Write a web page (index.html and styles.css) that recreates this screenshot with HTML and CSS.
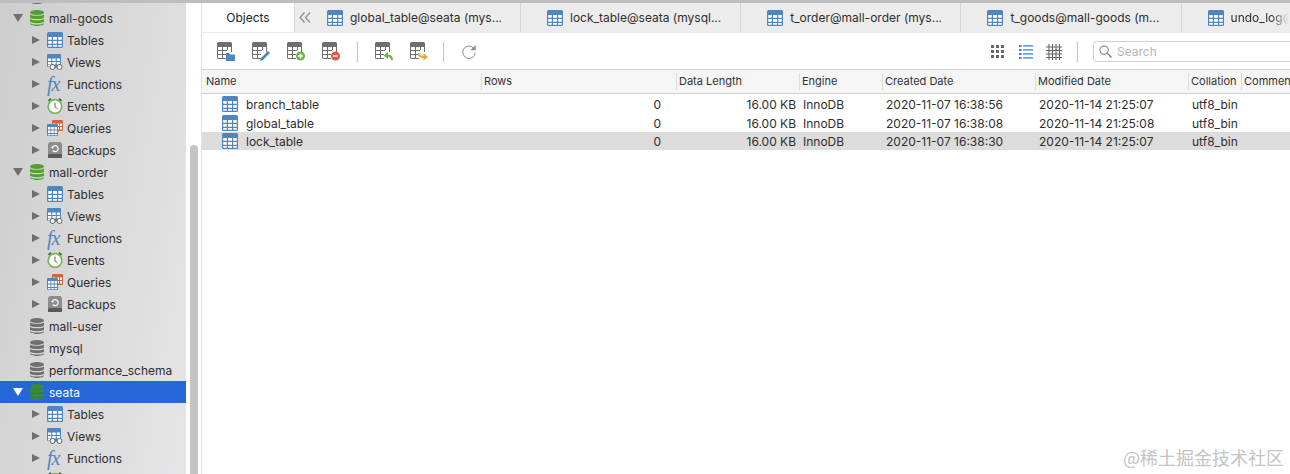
FILE: index.html
```html
<!DOCTYPE html>
<html lang="en">
<head>
<meta charset="utf-8">
<title>Navicat</title>
<link rel="stylesheet" href="styles.css">
</head>
<body>
<svg class="defs" width="0" height="0" aria-hidden="true">
  <defs>
    <symbol id="tbl" viewBox="0 0 16 16">
      <rect width="16" height="16" rx="1.5" fill="#4f86c0"/>
      <path fill="#fff" d="M1.2 5h3.6v2.8H1.200zM6 5h4v2.800H6zM11.200 5h3.600v2.800h-3.600zM1.200 9h3.600v2.800H1.200zM6 9h4v2.800H6zM11.200 9h3.600v2.800h-3.600zM1.200 13h3.600v1.800H1.200zM6 13h4v1.800H6zM11.200 13h3.600v1.800h-3.600z"/>
    </symbol>
    <symbol id="view" viewBox="0 0 16 16">
      <rect width="14" height="13" rx="1" fill="#4f86c0"/>
      <path fill="#fff" d="M1 4.500h3.200v2.500H1zM5.300 4.500h3.400v2.500H5.300zM9.800 4.500H13v2.500H9.800zM1 8h3.200v2.500H1zM5.300 8h3.400v2.500H5.300zM9.800 8H13v2.500H9.800zM1 11h3.200v1.500H1z"/>
      <circle cx="5.500" cy="13" r="2.500" fill="#fff" stroke="#666" stroke-width="1"/>
      <circle cx="12.500" cy="13" r="2.500" fill="#fff" stroke="#666" stroke-width="1"/>
      <path d="M8 13h2" stroke="#666"/>
    </symbol>
    <symbol id="clock" viewBox="0 0 16 16">
      <path d="M1.500 3 4 .8M14.500 3 12 .8" stroke="#44742f" stroke-width="2"/>
      <circle cx="8" cy="8.500" r="6.800" fill="#fff" stroke="#79b65b" stroke-width="1.800"/>
      <path d="M8 4.500v4.500" fill="none" stroke="#666" stroke-width="1"/>
      <path d="M8 9l2.800 2" stroke="#d9534f" stroke-width="1"/>
    </symbol>
    <symbol id="query" viewBox="0 0 16 16">
      <rect x="5" width="11" height="11" rx="1" fill="#d0643f"/>
      <path fill="#fff" d="M6 3.500h2.500v2.500H6zM10 3.500h2v2.500h-2zM13 3.500h2v2.500h-2zM10 7h2v2.500h-2zM13 7h2v2.500h-2z"/>
      <rect y="4" width="11" height="12" rx="1" fill="#4f86c0"/>
      <path fill="#fff" d="M1 7h2.500v2.500H1zM4.300 7h2.500v2.500H4.300zM7.600 7H10v2.500H7.600zM1 10.500h2.500V13H1zM4.300 10.500h2.500V13H4.300zM7.600 10.500H10V13H7.600zM1 14h2.500v1.300H1zM4.300 14h2.500v1.300H4.300zM7.600 14H10v1.300H7.600z"/>
    </symbol>
    <symbol id="backup" viewBox="0 0 16 16">
      <path d="M2.500 0h11L15 2v14H1V2z" fill="#8c8c8c"/>
      <rect x="1" y="12" width="14" height="4" rx="1" fill="#5a5a5a"/>
      <path d="M5.300 5.500a3 3 0 1 1 .5 3" fill="none" stroke="#fff" stroke-width="1.200"/>
      <path d="M3.800 5l2.800-.500-.6 2.500z" fill="#fff"/>
    </symbol>
    <symbol id="db" viewBox="0 0 14 16">
      <ellipse cx="7" cy="2.500" rx="7" ry="2.500"/>
      <path d="M0 4.200C1 6.300 13 6.300 14 4.200V7.500C13 9.500 1 9.500 0 7.500z"/>
      <path d="M0 8.800C1 10.800 13 10.800 14 8.800V11.800C13 13.700 1 13.700 0 11.800z"/>
      <path d="M0 13C1 15 13 15 14 13V13.800C13 16.700 1 16.700 0 13.800z"/>
    </symbol>
    <symbol id="gt" viewBox="0 0 18 19">
      <path fill="#6e6e6e" d="M1.500 0h12A1.500 1.500 0 0 1 15 1.500V10h-1V5H11v3h-1V5H6v3h4v1H6v3h3v1H6v3h3v1H1.500A1.500 1.500 0 0 1 0 15.500v-14A1.500 1.500 0 0 1 1.500 0zM1 5v3h4V5zM1 9v3h4V9zM1 13v2.500a.5.500 0 0 0 .5.500H5v-3z"/>
    </symbol>
  </defs>
</svg>

<div class="app">
  <div class="topline"></div>
  <div class="workspace">
    <aside class="sidebar">
      <ul class="tree">
        <li class="row db"><span class="tri none"></span><svg class="dbi grey"><use href="#db"/></svg></li>
        <li class="row db"><span class="tri down"></span><svg class="dbi green"><use href="#db"/></svg><span>mall-goods</span></li>
        <li class="row child"><span class="tri right"></span><svg class="ci"><use href="#tbl"/></svg><span>Tables</span></li>
        <li class="row child"><span class="tri right"></span><svg class="ci"><use href="#view"/></svg><span>Views</span></li>
        <li class="row child"><span class="tri right"></span><span class="fx">fx</span><span>Functions</span></li>
        <li class="row child"><span class="tri right"></span><svg class="ci"><use href="#clock"/></svg><span>Events</span></li>
        <li class="row child"><span class="tri right"></span><svg class="ci"><use href="#query"/></svg><span>Queries</span></li>
        <li class="row child"><span class="tri right"></span><svg class="ci"><use href="#backup"/></svg><span>Backups</span></li>
        <li class="row db"><span class="tri down"></span><svg class="dbi green"><use href="#db"/></svg><span>mall-order</span></li>
        <li class="row child"><span class="tri right"></span><svg class="ci"><use href="#tbl"/></svg><span>Tables</span></li>
        <li class="row child"><span class="tri right"></span><svg class="ci"><use href="#view"/></svg><span>Views</span></li>
        <li class="row child"><span class="tri right"></span><span class="fx">fx</span><span>Functions</span></li>
        <li class="row child"><span class="tri right"></span><svg class="ci"><use href="#clock"/></svg><span>Events</span></li>
        <li class="row child"><span class="tri right"></span><svg class="ci"><use href="#query"/></svg><span>Queries</span></li>
        <li class="row child"><span class="tri right"></span><svg class="ci"><use href="#backup"/></svg><span>Backups</span></li>
        <li class="row db"><span class="tri none"></span><svg class="dbi grey"><use href="#db"/></svg><span>mall-user</span></li>
        <li class="row db"><span class="tri none"></span><svg class="dbi grey"><use href="#db"/></svg><span>mysql</span></li>
        <li class="row db"><span class="tri none"></span><svg class="dbi grey"><use href="#db"/></svg><span>performance_schema</span></li>
        <li class="row db active"><span class="tri down"></span><svg class="dbi green"><use href="#db"/></svg><span>seata</span></li>
        <li class="row child"><span class="tri right"></span><svg class="ci"><use href="#tbl"/></svg><span>Tables</span></li>
        <li class="row child"><span class="tri right"></span><svg class="ci"><use href="#view"/></svg><span>Views</span></li>
        <li class="row child"><span class="tri right"></span><span class="fx">fx</span><span>Functions</span></li>
        <li class="row child"><span class="tri right"></span><svg class="ci"><use href="#clock"/></svg></li>
      </ul>
    </aside>
    <div class="scrolltrack"><div class="thumb"></div></div>

    <main class="main">
      <nav class="tabs">
        <div class="tab-objects">Objects</div>
        <div class="chev"><svg class="chevi" viewBox="0 0 12 11"><path d="M5.500.5 1 5.500l4.500 5M11 .5 6.500 5.500l4.500 5" fill="none" stroke="#8c8c8c" stroke-width="1.200"/></svg></div>
        <div class="tab first"><svg class="ci"><use href="#tbl"/></svg><span>global_table@seata (mys...</span></div>
        <div class="tab"><svg class="ci"><use href="#tbl"/></svg><span>lock_table@seata (mysql...</span></div>
        <div class="tab"><svg class="ci"><use href="#tbl"/></svg><span>t_order@mall-order (mys...</span></div>
        <div class="tab"><svg class="ci"><use href="#tbl"/></svg><span>t_goods@mall-goods (m...</span></div>
        <div class="tab last"><svg class="ci"><use href="#tbl"/></svg><span class="fade">undo_log@seata</span></div>
      </nav>

      <div class="toolbar">
        <div class="tools">
          <svg class="tool" viewBox="0 0 18 19"><use href="#gt"/><path fill="#4f86c0" d="M9 11h3l1 1.500h5V19H9z"/></svg>
          <svg class="tool" viewBox="0 0 18 19"><use href="#gt"/><path fill="#4f86c0" d="M9 16l7-7 2 2-7 7-3 1z"/></svg>
          <svg class="tool" viewBox="0 0 18 19"><use href="#gt"/><circle cx="13.500" cy="14" r="4.500" fill="#6db33f"/><path d="M11 14h5M13.500 11.500v5" stroke="#fff" stroke-width="1.500"/></svg>
          <svg class="tool" viewBox="0 0 18 19"><use href="#gt"/><circle cx="13.500" cy="14" r="4.500" fill="#e2574c"/><path d="M11 14h5" stroke="#fff" stroke-width="1.500"/></svg>
          <span class="sep"></span>
          <svg class="tool" viewBox="0 0 18 19"><use href="#gt"/><path d="M17 18c0-3-2-4.500-5-4.500" fill="none" stroke="#6db33f" stroke-width="2"/><path d="M13 10v7l-4.500-3.500z" fill="#6db33f"/></svg>
          <svg class="tool" viewBox="0 0 18 19"><use href="#gt"/><path d="M9 11.500c0 2.500 2 3.500 5 3.500" fill="none" stroke="#f0a030" stroke-width="2"/><path d="M13.500 11.500v7l4.500-3.500z" fill="#f0a030"/></svg>
          <span class="sep short"></span>
          <svg class="refresh" viewBox="0 0 18 18"><path d="M14.500 5A7 7 0 1 0 16 9.500" fill="none" stroke="#8a8a8a" stroke-width="1.100"/><path d="M16.500 1v6h-6z" fill="#8a8a8a"/></svg>
        </div>
        <div class="viewswitch">
          <svg class="vi" viewBox="0 0 14 14"><path fill="#666" d="M0 0h3v3H0zM5 0h3v3H5zM10 0h3v3h-3zM0 5h3v3H0zM5 5h3v3H5zM10 5h3v3h-3zM0 10h3v3H0zM5 10h3v3H5zM10 10h3v3h-3z"/></svg>
          <svg class="vi" viewBox="0 0 14 14"><path fill="#2f7ff0" d="M0 0h2.500v2H0zM4 .3h10v1.200H4zM0 4h2.500v2H0zM4 4.300h10v1.200H4zM0 8h2.500v2H0zM4 8.300h10v1.200H4zM0 12h2.500v2H0zM4 12.300h10v1.200H4z"/></svg>
          <svg class="vi wide" viewBox="0 0 16 16"><path d="M3 0v16M6.500 0v16M10 0v16M13.500 0v16M0 3h16M0 6.500h16M0 10h16M0 13.500h16" stroke="#666" stroke-width="1.100" fill="none"/></svg>
          <span class="sep tall"></span>
          <div class="search">
            <svg class="mag" viewBox="0 0 14 14"><circle cx="5.500" cy="5.500" r="4.500" fill="none" stroke="#777" stroke-width="1.100"/><path d="M9 9l4.500 4.500" stroke="#777" stroke-width="1.300"/></svg>
            <span>Search</span>
          </div>
        </div>
      </div>

      <div class="thead cols">
        <div>Name</div><div>Rows</div><div>Data Length</div><div>Engine</div><div>Created Date</div><div>Modified Date</div><div>Collation</div><div>Comment</div>
      </div>
      <div class="tbody">
        <div class="trow cols">
          <div class="name"><svg class="ci"><use href="#tbl"/></svg>branch_table</div><div class="num">0</div><div class="num len">16.00 KB</div><div>InnoDB</div><div>2020-11-07 16:38:56</div><div>2020-11-14 21:25:07</div><div>utf8_bin</div><div></div>
        </div>
        <div class="trow cols">
          <div class="name"><svg class="ci"><use href="#tbl"/></svg>global_table</div><div class="num">0</div><div class="num len">16.00 KB</div><div>InnoDB</div><div>2020-11-07 16:38:08</div><div>2020-11-14 21:25:08</div><div>utf8_bin</div><div></div>
        </div>
        <div class="trow cols selected">
          <div class="name"><svg class="ci"><use href="#tbl"/></svg>lock_table</div><div class="num">0</div><div class="num len">16.00 KB</div><div>InnoDB</div><div>2020-11-07 16:38:30</div><div>2020-11-14 21:25:07</div><div>utf8_bin</div><div></div>
        </div>
      </div>
    </main>
  </div>
  <div class="watermark">@稀土掘金技术社区</div>
</div>
</body>
</html>
```

FILE: styles.css
```css
* { box-sizing: border-box; }
html, body { margin: 0; padding: 0; background: #fff; }
body { font-family: Inter, "Liberation Sans", sans-serif; font-size: 12px; color: #2e2e2e; }
.defs { position: absolute; }
.app { position: relative; width: 1290px; height: 474px; overflow: hidden; display: flex; flex-direction: column; }
.topline { height: 3px; flex: none; background: #bdbdbd; }
.workspace { flex: 1; display: flex; min-height: 0; }

.sidebar { width: 186px; flex: none; overflow: hidden; background: linear-gradient(100deg, #cdcdcd 0%, #dcdcdc 60%, #e6e6e8 100%); }
.tree { list-style: none; margin: -18px 0 0; padding: 0; }
.row { height: 22px; display: flex; align-items: center; white-space: nowrap; }
.row.db { padding-left: 13px; }
.row.child { padding-left: 32px; }
.row.active { background: #2467d9; color: #fff; }
.tri { flex: none; width: 0; height: 0; }
.tri.right { border-left: 8px solid #6f6f6f; border-top: 4.5px solid transparent; border-bottom: 4.5px solid transparent; margin-right: 7px; }
.tri.down { border-top: 8px solid #6f6f6f; border-left: 5px solid transparent; border-right: 5px solid transparent; margin-right: 7px; }
.tri.none { width: 10px; margin-right: 7px; }
.active .tri.down { border-top-color: #fff; }
.dbi { width: 14px; height: 16px; flex: none; margin-right: 5px; }
.dbi.green { fill: #4f9f31; }
.dbi.grey { fill: #6f6f6f; }
.active .dbi.green { fill: #3f8a2c; }
.ci { width: 16px; height: 16px; flex: none; margin-right: 4px; }
.fx { width: 16px; margin-right: 4px; flex: none; font: italic 20px/16px "Liberation Serif", serif; color: #4f86c0; letter-spacing: -1px; }

.scrolltrack { width: 16px; flex: none; background: #fff; padding: 142px 0 0 4px; border-right: 1px solid #e2e2e2; }
.thumb { width: 8px; height: 340px; border-radius: 4px 4px 0 0; background: #c4c4c4; }

.main { flex: 1; min-width: 0; display: flex; flex-direction: column; }
.tabs { height: 30px; flex: none; display: flex; align-items: stretch; background: #ececec; border-bottom: 1px solid #ececec; white-space: nowrap; font-size: 12px; }
.tab-objects { width: 93px; flex: none; background: #fff; display: flex; align-items: center; justify-content: center; border-right: 1px solid #d8d8d8; color: #222; }
.chev { width: 31px; flex: none; padding-left: 4px; display: flex; align-items: center; }
.chevi { width: 12px; height: 11px; }
.tab { width: 220.2px; flex: none; display: flex; align-items: center; padding-left: 26px; border-right: 1px solid #d4d4d4; overflow: hidden; }
.tab .ci { margin-right: 7px; }
.tab.first { width: 195px; padding-left: 1px; }
.tab.last { border-right: 0; }
.fade { width: 58px; overflow: hidden; -webkit-mask-image: linear-gradient(90deg, #000 70%, transparent); mask-image: linear-gradient(90deg, #000 70%, transparent); }

.toolbar { height: 36px; padding-top: 1px; flex: none; display: flex; justify-content: space-between; align-items: center; background: #fff; }
.tools { display: flex; align-items: center; padding-left: 15px; gap: 17px; }
.tool { width: 18px; height: 19px; flex: none; }
.refresh { width: 16px; height: 16px; flex: none; }
.sep { width: 1px; height: 20px; background: #c4c4c4; flex: none; }
.sep.short { margin-left: -2px; }
.viewswitch { display: flex; align-items: center; gap: 14px; }
.vi { width: 14px; height: 14px; flex: none; }
.vi.wide { width: 16px; height: 16px; margin-left: -1px; }
.sep.tall { margin: 0 1px; }
.search { width: 210px; height: 21px; margin-right: -13px; border: 1px solid #cfcfcf; border-radius: 4px; display: flex; align-items: center; gap: 5px; padding-left: 5px; color: #b5b5b5; }
.mag { width: 13px; height: 13px; }

.cols { display: grid; grid-template-columns: 279px 195px 123px 83px 153px 153px 53px 60px; }
.thead { height: 25px; flex: none; background: #f5f5f5; border-top: 1px solid #cfcfcf; border-bottom: 1px solid #cfcfcf; font-size: 11px; align-items: center; color: #333; overflow: hidden; white-space: nowrap; }
.thead > div { padding-left: 2px; border-left: 1px solid #dcdcdc; height: 17px; line-height: 17px; }
.thead > div:first-child { border-left: 0; padding-left: 4px; }
.tbody { flex: 1; padding-top: 1px; }
.trow { height: 18px; align-items: center; white-space: nowrap; overflow: hidden; }
.trow:first-child { height: 19px; padding-bottom: 1px; }
.trow > div { padding-left: 4px; }
.trow .name { display: flex; align-items: center; padding-left: 20px; }
.trow .name .ci { margin-right: 8px; }
.trow .num { text-align: right; padding-right: 15px; }
.trow .num.len { padding-right: 3px; }
.selected { background: #dcdcdc; }

.watermark { position: absolute; right: 6px; bottom: 6px; font: 18px/22px "Noto Sans CJK SC", sans-serif; color: #c4c4c4; white-space: nowrap; }
```
